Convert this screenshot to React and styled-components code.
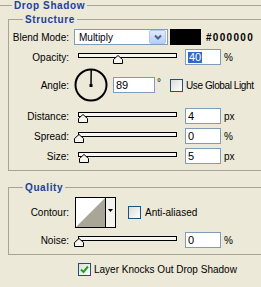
import React from 'react';
import styled, { createGlobalStyle } from 'styled-components';

const GlobalStyle = createGlobalStyle`
  body {
    margin: 0;
    background: #ECE9D8;
  }
`;

const Root = styled.div`
  width: 261px;
  height: 287px;
  overflow: hidden;
  background: #ECE9D8;
  font-family: "Liberation Sans", Arial, sans-serif;
  font-size: 10px;
  color: #000;
`;

const Group = styled.fieldset`
  margin: ${p => p.$mt || 0}px 0 0 ${p => p.$ml || 0}px;
  padding: 0;
  min-width: 0;
  min-height: ${p => (p.$outer ? '300px' : 'auto')};
  border: 1px solid #A7A493;
  border-right: none;
  ${p => p.$outer && 'border-left: none; border-bottom: none;'}
`;

const Legend = styled.legend`
  margin-left: ${p => p.$ml}px;
  padding: 0 2px;
  font-weight: bold;
  font-size: 10px;
  line-height: 11px;
  letter-spacing: 0.6px;
  color: #21409A;
`;

const Body = styled.div`
  display: flex;
  flex-direction: column;
  padding: ${p => p.$pt}px 0 ${p => p.$pb}px 0;
`;

const Row = styled.div`
  display: flex;
  align-items: center;
  height: ${p => p.$h || 16}px;
  margin-top: ${p => p.$mt || 0}px;
`;

const Label = styled.div`
  flex: none;
  width: 60px;
  margin-right: 5px;
  text-align: right;
  white-space: nowrap;
`;

const Select = styled.div`
  display: flex;
  align-items: center;
  width: 94px;
  height: 16px;
  box-sizing: border-box;
  border: 1px solid #7F9DB9;
  background: #fff;
  padding: 1px;
`;

const SelectText = styled.span`
  flex: 1;
  padding-left: 3px;
`;

const SelectButton = styled.div`
  width: 15px;
  height: 12px;
  border: 1px solid #B3C6F5;
  border-radius: 2px;
  background: linear-gradient(#E1EAFE, #B8CDFA);
  display: flex;
  align-items: center;
  justify-content: center;
`;

const Swatch = styled.div`
  width: 31px;
  height: 16px;
  margin-left: 2px;
  background: #000;
`;

const Hex = styled.span`
  margin-left: 5px;
  font-weight: bold;
  letter-spacing: 1.3px;
`;

const SliderWrap = styled.div`
  position: relative;
  flex: none;
  width: 107px;
  height: 16px;
  padding-top: 4px;
  box-sizing: border-box;
`;

const Track = styled.div`
  margin: 0 4px;
  height: 5px;
  box-sizing: border-box;
  border: 1px solid #000;
  background: #F7F6F0;
`;

const Thumb = styled.svg`
  position: absolute;
  top: 6px;
`;

const Field = styled.div`
  flex: none;
  display: flex;
  align-items: center;
  width: ${p => p.$w || 36}px;
  height: 16px;
  box-sizing: border-box;
  margin-left: ${p => (p.$ml === undefined ? 4 : p.$ml)}px;
  padding-left: 2px;
  border: 1px solid #7F9DB9;
  background: #fff;
  font-size: 11px;
`;

const Selected = styled.span`
  background: #316AC5;
  color: #fff;
  padding: 0 1px;
  line-height: 11px;
`;

const Unit = styled.span`
  margin-left: 3px;
`;

const Degree = styled.span`
  align-self: flex-start;
  margin: 9px 0 0 2px;
`;

const Box = styled.div`
  flex: none;
  width: 13px;
  height: 13px;
  box-sizing: border-box;
  margin-left: ${p => p.$ml || 0}px;
  border: 1px solid #1C5180;
  background: linear-gradient(135deg, #DCDCD7, #fff);
  display: flex;
  align-items: center;
  justify-content: center;
`;

const BoxText = styled.span`
  margin-left: ${p => p.$ml || 3}px;
  letter-spacing: ${p => p.$ls || 0}px;
  white-space: nowrap;
`;

const ContourBox = styled.div`
  flex: none;
  display: flex;
  width: 41px;
  height: 31px;
  box-sizing: border-box;
  margin-left: 1px;
  border: 1px solid #000;
  background: #fff;
`;

const ContourDrop = styled.div`
  flex: 1;
  display: flex;
  justify-content: center;
  padding-top: 11px;
  border-left: 1px solid #000;
  background: #F4F3EE;
`;

const FooterRow = styled.div`
  display: flex;
  align-items: center;
  margin: 8px 0 0 78px;
  height: 13px;
`;

function Slider({ pos }) {
  return (
    <SliderWrap>
      <Track />
      <Thumb width="10" height="9" viewBox="0 0 10 9" style={{ left: 4 + pos - 4.5 }}>
        <polygon points="0.5,8.5 0.5,4.5 5,0.5 9.5,4.5 9.5,8.5" fill="#F6F5EF" stroke="#000" />
      </Thumb>
    </SliderWrap>
  );
}

function Check({ checked, ml }) {
  return (
    <Box $ml={ml}>
      {checked && (
        <svg width="9" height="9" viewBox="0 0 9 9">
          <path d="M1 4.5 L3.5 7 L8 1.5" fill="none" stroke="#21A121" strokeWidth="2" />
        </svg>
      )}
    </Box>
  );
}

function SliderRow({ label, pos, value, unit, mt, selected }) {
  return (
    <Row $mt={mt}>
      <Label>{label}</Label>
      <Slider pos={pos} />
      <Field>{selected ? <Selected>{value}</Selected> : value}</Field>
      <Unit>{unit}</Unit>
    </Row>
  );
}

export default function App() {
  return (
    <Root>
      <GlobalStyle />
      <Group $outer>
        <Legend $ml={12}>Drop Shadow</Legend>
        <Group $ml={8} $mt={3}>
          <Legend $ml={14}>Structure</Legend>
          <Body $pt={4} $pb={6}>
            <Row>
              <Label>Blend Mode:</Label>
              <Select>
                <SelectText>Multiply</SelectText>
                <SelectButton>
                  <svg width="8" height="6" viewBox="0 0 8 6">
                    <path d="M1 1.5 L4 4.5 L7 1.5" fill="none" stroke="#4D6185" strokeWidth="2" />
                  </svg>
                </SelectButton>
              </Select>
              <Swatch />
              <Hex>#000000</Hex>
            </Row>
            <SliderRow label="Opacity:" pos={39.6} value="40" unit="%" mt={4} selected />
            <Row $h={34} $mt={3}>
              <Label>Angle:</Label>
              <svg width="34" height="34" viewBox="0 0 34 34">
                <circle cx="17" cy="17" r="15.5" fill="none" stroke="#000" strokeWidth="2" />
                <line x1="17" y1="17" x2="17.2" y2="2" stroke="#000" strokeWidth="1.5" />
                <rect x="15.5" y="16" width="3" height="3" fill="#000" />
              </svg>
              <Field $w={42} $ml={5}>89</Field>
              <Degree>°</Degree>
              <Check ml={9} />
              <BoxText $ls={-0.4}>Use Global Light</BoxText>
            </Row>
            <SliderRow label="Distance:" pos={4} value="4" unit="px" mt={6} />
            <SliderRow label="Spread:" pos={0} value="0" unit="%" mt={4} />
            <SliderRow label="Size:" pos={5} value="5" unit="px" mt={4} />
          </Body>
        </Group>
        <Group $ml={8} $mt={11}>
          <Legend $ml={14}>Quality</Legend>
          <Body $pt={4} $pb={6}>
            <Row $h={31}>
              <Label>Contour:</Label>
              <ContourBox>
                <svg width="29" height="29" viewBox="0 0 29 29">
                  <polygon points="0,29 29,0 29,29" fill="#A9A597" />
                </svg>
                <ContourDrop>
                  <svg width="5" height="3" viewBox="0 0 5 3">
                    <polygon points="0,0 5,0 2.5,3" fill="#000" />
                  </svg>
                </ContourDrop>
              </ContourBox>
              <Check ml={12} />
              <BoxText $ml={4}>Anti-aliased</BoxText>
            </Row>
            <SliderRow label="Noise:" pos={0} value="0" unit="%" mt={4} />
          </Body>
        </Group>
        <FooterRow>
          <Check checked />
          <BoxText>Layer Knocks Out Drop Shadow</BoxText>
        </FooterRow>
      </Group>
    </Root>
  );
}
